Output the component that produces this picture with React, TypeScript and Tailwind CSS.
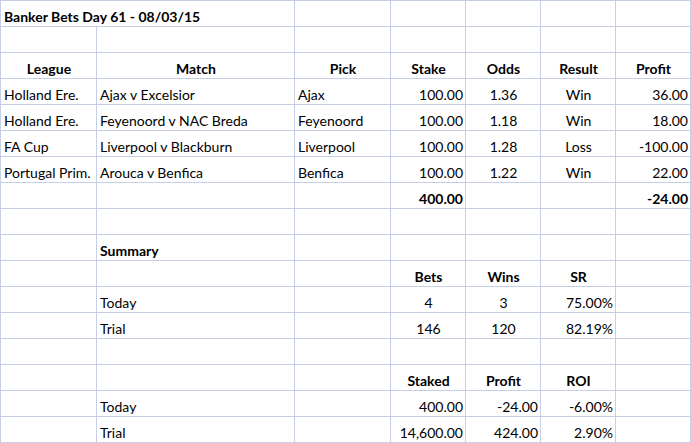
import React from "react";

type Cell = { t?: string; b?: boolean; a?: "l" | "c" | "r"; span?: number };

const rows: Cell[][] = [
  [{ t: "Banker Bets Day 61 - 08/03/15", b: true, span: 2 }, {}, {}, {}, {}, {}],
  [{}, {}, {}, {}, {}, {}, {}],
  [
    { t: "League", b: true, a: "c" },
    { t: "Match", b: true, a: "c" },
    { t: "Pick", b: true, a: "c" },
    { t: "Stake", b: true, a: "c" },
    { t: "Odds", b: true, a: "c" },
    { t: "Result", b: true, a: "c" },
    { t: "Profit", b: true, a: "c" },
  ],
  [
    { t: "Holland Ere." },
    { t: "Ajax v Excelsior" },
    { t: "Ajax" },
    { t: "100.00", a: "r" },
    { t: "1.36", a: "c" },
    { t: "Win", a: "c" },
    { t: "36.00", a: "r" },
  ],
  [
    { t: "Holland Ere." },
    { t: "Feyenoord v NAC Breda" },
    { t: "Feyenoord" },
    { t: "100.00", a: "r" },
    { t: "1.18", a: "c" },
    { t: "Win", a: "c" },
    { t: "18.00", a: "r" },
  ],
  [
    { t: "FA Cup" },
    { t: "Liverpool v Blackburn" },
    { t: "Liverpool" },
    { t: "100.00", a: "r" },
    { t: "1.28", a: "c" },
    { t: "Loss", a: "c" },
    { t: "-100.00", a: "r" },
  ],
  [
    { t: "Portugal Prim." },
    { t: "Arouca v Benfica" },
    { t: "Benfica" },
    { t: "100.00", a: "r" },
    { t: "1.22", a: "c" },
    { t: "Win", a: "c" },
    { t: "22.00", a: "r" },
  ],
  [{}, {}, {}, { t: "400.00", a: "r", b: true }, {}, {}, { t: "-24.00", a: "r", b: true }],
  [{}, {}, {}, {}, {}, {}, {}],
  [{}, { t: "Summary", b: true }, {}, {}, {}, {}, {}],
  [{}, {}, {}, { t: "Bets", b: true, a: "c" }, { t: "Wins", b: true, a: "c" }, { t: "SR", b: true, a: "c" }, {}],
  [{}, { t: "Today" }, {}, { t: "4", a: "c" }, { t: "3", a: "c" }, { t: "75.00%", a: "r" }, {}],
  [{}, { t: "Trial" }, {}, { t: "146", a: "c" }, { t: "120", a: "c" }, { t: "82.19%", a: "r" }, {}],
  [{}, {}, {}, {}, {}, {}, {}],
  [{}, {}, {}, { t: "Staked", b: true, a: "c" }, { t: "Profit", b: true, a: "c" }, { t: "ROI", b: true, a: "c" }, {}],
  [{}, { t: "Today" }, {}, { t: "400.00", a: "r" }, { t: "-24.00", a: "r" }, { t: "-6.00%", a: "r" }, {}],
  [{}, { t: "Trial" }, {}, { t: "14,600.00", a: "r" }, { t: "424.00", a: "r" }, { t: "2.90%", a: "r" }, {}],
];

export default function App() {
  return (
    <div className="w-[691px] h-[443px] bg-white overflow-hidden">
      <div
        className="grid grid-cols-[95px_197px_95px_74px_74px_74px_74px] auto-rows-[25px] gap-px p-px bg-[#c6cfe7] text-black text-[14px]"
        style={{ fontFamily: "Lato, 'Liberation Sans', sans-serif" }}
      >
        {rows.map((r, i) =>
          r.map((c, j) => (
            <div
              key={`${i}-${j}`}
              className={
                "bg-white pt-[7px] pl-[3px] pr-[2px] leading-[17px] whitespace-nowrap overflow-visible " +
                (c.span === 2 ? "col-span-2 " : "") +
                (c.b ? "font-bold " : "") +
                (c.a === "c" ? "text-center " : c.a === "r" ? "text-right " : "text-left ")
              }
            >
              {c.t ?? ""}
            </div>
          ))
        )}
      </div>
    </div>
  );
}
